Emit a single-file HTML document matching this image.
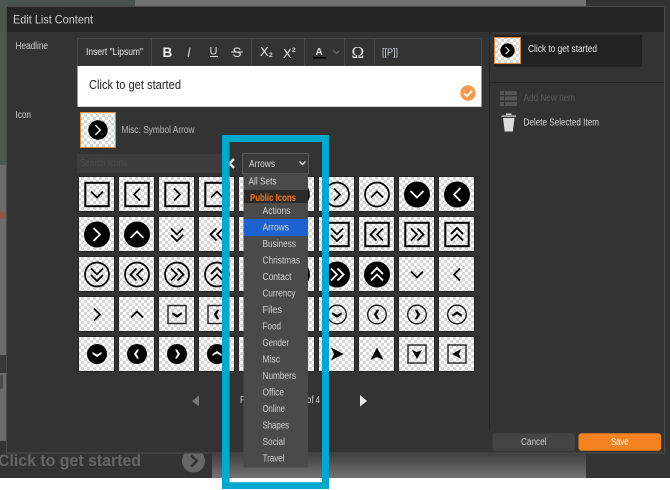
<!DOCTYPE html>
<html><head><meta charset="utf-8"><style>
html,body{margin:0;padding:0;background:#fff;width:670px;height:490px;overflow:hidden}
svg{display:block;filter:blur(.35px)}
text{font-family:"Liberation Sans",sans-serif;font-size:10px;fill:#d0d0d0;stroke:currentColor;stroke-width:0}
.m text{font-size:10px;fill:#d2d2d2}
</style></head><body>
<svg width="670" height="490" viewBox="0 0 670 490" xmlns="http://www.w3.org/2000/svg">
<defs>
<pattern id="chk" width="6" height="6" patternUnits="userSpaceOnUse"><rect width="6" height="6" fill="#fff"/><rect width="3" height="3" fill="#d6d6d6"/><rect x="3" y="3" width="3" height="3" fill="#d6d6d6"/></pattern>
<linearGradient id="bot" x1="0" y1="0" x2="0" y2="1"><stop offset="0" stop-color="#3e3e3e"/><stop offset="1" stop-color="#737373"/></linearGradient>
<path id="c" d="M-6-3L0 3L6-3" fill="none" stroke="#000" stroke-width="1.800"/>
<path id="cw" d="M-6.500-3.500L0 3L6.500-3.500" fill="none" stroke="#fff" stroke-width="1.800"/>
<path id="d" d="M-6-6L0 0L6-6M-6 0.500L0 6.500L6 0.500" fill="none" stroke="#000" stroke-width="1.800"/>
<path id="dw" d="M-6-6L0 0L6-6M-6 0.500L0 6.500L6 0.500" fill="none" stroke="#fff" stroke-width="1.800"/>
<path id="b" d="M-4.500-2L0 0.600L4.500-2L4.500 0L0 3L-4.500 0Z" fill="#000" stroke="#000" stroke-width=".5"/>
<path id="bw" d="M-4.500-2L0 0.600L4.500-2L4.500 0L0 3L-4.500 0Z" fill="#fff"/>
<path id="t" d="M-6.500-6L0 6.500L6.500-6L0-3Z" fill="#000"/>
<g id="sq1"><rect x="-11.700" y="-11.700" width="23.400" height="23.400" fill="none" stroke="#000" stroke-width="2"/><use href="#c"/></g>
<g id="ci1"><circle r="13" fill="#000"/><use href="#cw"/></g>
<g id="ri1"><circle r="12" fill="none" stroke="#000" stroke-width="1.700"/><use href="#c"/></g>
<g id="sq2"><rect x="-11.700" y="-11.700" width="23.400" height="23.400" fill="none" stroke="#000" stroke-width="2"/><use href="#d"/></g>
<g id="ci2"><circle r="13" fill="#000"/><use href="#dw"/></g>
<g id="ri2"><circle r="12" fill="none" stroke="#000" stroke-width="1.700"/><use href="#d"/></g>
<g id="sq3"><rect x="-9" y="-9" width="18" height="18" fill="none" stroke="#222" stroke-width="1.400"/><use href="#b"/></g>
<g id="ri3"><circle r="9.300" fill="none" stroke="#111" stroke-width="1.300"/><use href="#b"/></g>
<g id="ci3"><circle r="10" fill="#000"/><use href="#bw"/></g>
<g id="sq4"><rect x="-9" y="-9" width="18" height="18" fill="none" stroke="#222" stroke-width="1.400"/><path d="M-5-4L0 5L5-4L0-2Z" fill="#000"/></g>
</defs>

<!-- background -->
<rect width="670" height="490" fill="#fff"/>
<rect width="670" height="478" fill="#6c6c6c"/>
<rect x="586" width="84" height="478" fill="#333"/>
<rect x="0" y="0" width="135" height="6" fill="#46524a"/>
<rect x="0" y="0" width="7" height="165" fill="#4c574f"/>
<rect x="135" y="0" width="451" height="6" fill="#727272"/>
<rect x="0" y="212" width="7" height="7" fill="#a0522d" opacity=".7"/>
<rect x="0" y="355" width="6" height="18" fill="#383838"/>
<rect x="0" y="375" width="3" height="14" fill="#4c4c4c"/>
<rect x="0" y="453" width="586" height="25" fill="url(#bot)"/>
<rect x="0" y="441" width="212" height="37" fill="#333"/>
<text x="-2" y="466" textLength="143" lengthAdjust="spacingAndGlyphs" style="font-size:17px;font-weight:bold;fill:#666">Click to get started</text>
<circle cx="193.500" cy="461" r="11.500" fill="#666"/>
<path d="M191 455.500L197 461L191 466.500" fill="none" stroke="#333" stroke-width="2.500"/>

<!-- modal -->
<rect x="6.500" y="6.500" width="658" height="446.500" fill="#333" stroke="#4c4c4c"/>
<rect x="7" y="7" width="657" height="25" fill="#252525"/>
<text x="13" y="23.500" textLength="80" lengthAdjust="spacingAndGlyphs" style="font-size:12px;fill:#cecece">Edit List Content</text>

<text x="15.500" y="49" textLength="32.500" lengthAdjust="spacingAndGlyphs">Headline</text>
<text x="15.500" y="118" textLength="15.500" lengthAdjust="spacingAndGlyphs">Icon</text>

<!-- toolbar -->
<rect x="77.500" y="38.500" width="404" height="27.500" fill="#333" stroke="#484848"/>
<path d="M151.500 39V66M251.500 39V66M304.500 39V66M344.500 39V66M374.500 39V66" stroke="#484848"/>
<text x="86" y="55" textLength="57" lengthAdjust="spacingAndGlyphs" style="fill:#eaeaea">Insert "Lipsum"</text>
<text x="162.500" y="57" style="font-size:13.500px;font-weight:bold;fill:#eee">B</text>
<text x="187" y="57" style="font-size:13.500px;font-style:italic;fill:#ccc">I</text>
<text x="209.500" y="54.500" style="font-size:11px;fill:#ddd">U</text>
<rect x="210" y="56" width="8" height="1" fill="#ddd"/>
<text x="232.500" y="57" style="font-size:13.500px;fill:#ddd">S</text>
<rect x="231" y="51.500" width="12" height="1" fill="#ddd"/>
<text x="260" y="56" style="font-size:13px;fill:#e4e4e4">X</text>
<text x="269" y="57" style="font-size:6.500px;font-weight:bold;fill:#ddd">2</text>
<text x="283" y="58" style="font-size:13px;fill:#e4e4e4">X</text>
<text x="292" y="52" style="font-size:6.500px;font-weight:bold;fill:#ddd">2</text>
<text x="315.500" y="55" style="font-size:10px;font-weight:bold;fill:#ddd">A</text>
<rect x="313" y="57" width="13" height="1.600" fill="#000"/>
<path d="M333.500 50.500L336.500 53.500L339.500 50.500" fill="none" stroke="#666" stroke-width="1.200"/>
<text x="351.500" y="58" style="font-family:'Liberation Serif',serif;font-size:17px;fill:#e4e4e4">Ω</text>
<text x="382" y="55.500" textLength="16" lengthAdjust="spacingAndGlyphs" style="fill:#c4d4e4">[[P]]</text>

<!-- editor -->
<rect x="77.500" y="66" width="404" height="40.500" fill="#fff"/>
<rect x="77.500" y="106" width="404" height="1" fill="#ccc"/>
<text x="89" y="89" textLength="92" lengthAdjust="spacingAndGlyphs" style="font-size:12.500px;fill:#222">Click to get started</text>
<circle cx="468" cy="93" r="7.700" fill="#f59a4c"/>
<path d="M464 93.500L467 96.200L472.300 90.800" fill="none" stroke="#fff" stroke-width="1.800"/>

<!-- icon row -->
<rect x="80.500" y="112.500" width="35" height="35" fill="url(#chk)" stroke="#e08a3a"/>
<use href="#ci1" transform="translate(98 130) rotate(-90) scale(.75)"/>
<text x="121.500" y="133" textLength="73" lengthAdjust="spacingAndGlyphs" style="fill:#bcbcbc">Misc: Symbol Arrow</text>

<!-- search -->
<rect x="77" y="154" width="145" height="19" fill="#3d3d3d"/>
<text x="80" y="166" textLength="47" lengthAdjust="spacingAndGlyphs" style="fill:#4c4c4c">Search Icons</text>
<path d="M234 159L229.500 163.500L234 168" fill="none" stroke="#e4e4e4" stroke-width="2.400"/>

<!-- tiles -->
<g fill="url(#chk)" stroke="#222" stroke-width="1">
<g id="rowr">
<rect x="78.500" y="176.500" width="36" height="35"/><rect x="118.500" y="176.500" width="36" height="35"/><rect x="158.500" y="176.500" width="36" height="35"/><rect x="198.500" y="176.500" width="36" height="35"/><rect x="238.500" y="176.500" width="36" height="35"/><rect x="278.500" y="176.500" width="36" height="35"/><rect x="318.500" y="176.500" width="36" height="35"/><rect x="358.500" y="176.500" width="36" height="35"/><rect x="398.500" y="176.500" width="36" height="35"/><rect x="438.500" y="176.500" width="36" height="35"/>
</g>
<use href="#rowr" y="40"/><use href="#rowr" y="80"/><use href="#rowr" y="120"/><use href="#rowr" y="160"/>
</g>
<!-- row 1 -->
<use href="#sq1" transform="translate(97 194.500)"/>
<use href="#sq1" transform="translate(137 194.500) rotate(90)"/>
<use href="#sq1" transform="translate(177 194.500) rotate(-90)"/>
<use href="#sq1" transform="translate(217 194.500) rotate(180)"/>
<use href="#ri1" transform="translate(257 194.500)"/>
<use href="#ri1" transform="translate(297 194.500) rotate(90)"/>
<use href="#ri1" transform="translate(337 194.500) rotate(-90)"/>
<use href="#ri1" transform="translate(377 194.500) rotate(180)"/>
<use href="#ci1" transform="translate(417 194.500)"/>
<use href="#ci1" transform="translate(457 194.500) rotate(90)"/>
<!-- row 2 -->
<use href="#ci1" transform="translate(97 234.500) rotate(-90)"/>
<use href="#ci1" transform="translate(137 234.500) rotate(180)"/>
<use href="#d" transform="translate(177 234.500)"/>
<use href="#d" transform="translate(217 234.500) rotate(90)"/>
<use href="#d" transform="translate(257 234.500) rotate(-90)"/>
<use href="#d" transform="translate(297 234.500) rotate(180)"/>
<use href="#sq2" transform="translate(337 234.500)"/>
<use href="#sq2" transform="translate(377 234.500) rotate(90)"/>
<use href="#sq2" transform="translate(417 234.500) rotate(-90)"/>
<use href="#sq2" transform="translate(457 234.500) rotate(180)"/>
<!-- row 3 -->
<use href="#ri2" transform="translate(97 274.500)"/>
<use href="#ri2" transform="translate(137 274.500) rotate(90)"/>
<use href="#ri2" transform="translate(177 274.500) rotate(-90)"/>
<use href="#ri2" transform="translate(217 274.500) rotate(180)"/>
<use href="#ci2" transform="translate(257 274.500)"/>
<use href="#ci2" transform="translate(297 274.500) rotate(90)"/>
<use href="#ci2" transform="translate(337 274.500) rotate(-90)"/>
<use href="#ci2" transform="translate(377 274.500) rotate(180)"/>
<use href="#c" transform="translate(417 274.500)"/>
<use href="#c" transform="translate(457 274.500) rotate(90)"/>
<!-- row 4 -->
<use href="#c" transform="translate(97 314.500) rotate(-90)"/>
<use href="#c" transform="translate(137 314.500) rotate(180)"/>
<use href="#sq3" transform="translate(177 314.500)"/>
<use href="#sq3" transform="translate(217 314.500) rotate(90)"/>
<use href="#sq3" transform="translate(257 314.500) rotate(-90)"/>
<use href="#sq3" transform="translate(297 314.500) rotate(180)"/>
<use href="#ri3" transform="translate(337 314.500)"/>
<use href="#ri3" transform="translate(377 314.500) rotate(90)"/>
<use href="#ri3" transform="translate(417 314.500) rotate(-90)"/>
<use href="#ri3" transform="translate(457 314.500) rotate(180)"/>
<!-- row 5 -->
<use href="#ci3" transform="translate(97 354)"/>
<use href="#ci3" transform="translate(137 354) rotate(90)"/>
<use href="#ci3" transform="translate(177 354) rotate(-90)"/>
<use href="#ci3" transform="translate(217 354) rotate(180)"/>
<use href="#t" transform="translate(257 354)"/>
<use href="#t" transform="translate(297 354) rotate(90)"/>
<use href="#t" transform="translate(337 354) rotate(-90)"/>
<use href="#t" transform="translate(377 354) rotate(180)"/>
<use href="#sq4" transform="translate(417 354)"/>
<use href="#sq4" transform="translate(457 354) rotate(90)"/>

<!-- pagination -->
<path d="M199 395.500V406.500L192 401Z" fill="#777"/>
<path d="M360 395V406.500L367 401Z" fill="#e8e8e8"/>
<text x="240" y="403" textLength="18" lengthAdjust="spacingAndGlyphs" style="fill:#d0d0d0">Page</text>
<text x="307" y="403" textLength="13" lengthAdjust="spacingAndGlyphs" style="fill:#d0d0d0">of 4</text>

<!-- right pane -->
<path d="M489.500 32V431" stroke="#232323"/>
<path d="M490 82.500H664" stroke="#262626"/>
<rect x="494" y="35" width="148" height="32" fill="#222"/>
<rect x="494.500" y="37.500" width="26" height="26" fill="url(#chk)" stroke="#d8823a"/>
<use href="#ci1" transform="translate(507.500 50.500) rotate(-90) scale(.55)"/>
<text x="528" y="52" textLength="69" lengthAdjust="spacingAndGlyphs" style="fill:#e6e6e6">Click to get started</text>
<g fill="#555">
<rect x="500" y="91" width="4" height="4"/><rect x="505" y="91" width="12" height="4"/>
<rect x="500" y="96.500" width="4" height="4"/><rect x="505" y="96.500" width="12" height="4"/>
<rect x="500" y="102" width="4" height="4"/><rect x="505" y="102" width="12" height="4"/>
</g>
<text x="523.500" y="101" textLength="51.500" lengthAdjust="spacingAndGlyphs" style="fill:#5c5c5c">Add New Item</text>
<path d="M501.500 115.500H516V116.800H501.500ZM503 118H514.500L512.800 131.500H504.700Z" fill="#dcdcdc"/>
<rect x="506" y="113.500" width="5.500" height="1.500" fill="#dcdcdc"/>
<text x="523.500" y="125.500" textLength="75.500" lengthAdjust="spacingAndGlyphs" style="fill:#dadada">Delete Selected Item</text>

<!-- buttons -->
<rect x="492.300" y="433.300" width="82.700" height="17.500" rx="3" fill="#444"/>
<text x="521" y="445" textLength="25.500" lengthAdjust="spacingAndGlyphs" style="fill:#d0d0d0">Cancel</text>
<rect x="578.500" y="433.300" width="82.700" height="17.500" rx="3" fill="#f58220"/>
<text x="611" y="445" textLength="17.500" lengthAdjust="spacingAndGlyphs" style="fill:#fff">Save</text>

<!-- select + dropdown -->
<rect x="242.500" y="153.500" width="66" height="20" fill="#3a3a3a" stroke="#5a5a5a"/>
<text x="249" y="167" textLength="26" lengthAdjust="spacingAndGlyphs" style="fill:#d8d8d8">Arrows</text>
<path d="M299.500 161.500L302.500 164.500L305.500 161.500" fill="none" stroke="#ddd" stroke-width="1.400"/>
<rect x="243.500" y="173.500" width="64.500" height="294" fill="#4a4a4a"/>
<text x="248.500" y="184.500" textLength="28" lengthAdjust="spacingAndGlyphs" style="fill:#d8d8d8">All Sets</text>
<rect x="244" y="190" width="64" height="13" fill="#2b2a29"/>
<text x="250" y="201" textLength="46" lengthAdjust="spacingAndGlyphs" style="font-weight:bold;fill:#f47a20">Public Icons</text>
<rect x="244" y="219" width="64" height="17" fill="#1c62d0"/>
<g class="m">
<text x="262.500" y="214" textLength="28" lengthAdjust="spacingAndGlyphs">Actions</text>
<text x="262.500" y="230.500" textLength="26.500" lengthAdjust="spacingAndGlyphs">Arrows</text>
<text x="262.500" y="247" textLength="33.500" lengthAdjust="spacingAndGlyphs">Business</text>
<text x="262.500" y="263.500" textLength="37.500" lengthAdjust="spacingAndGlyphs">Christmas</text>
<text x="262.500" y="280" textLength="29" lengthAdjust="spacingAndGlyphs">Contact</text>
<text x="262.500" y="296.500" textLength="33" lengthAdjust="spacingAndGlyphs">Currency</text>
<text x="262.500" y="313" textLength="19.500" lengthAdjust="spacingAndGlyphs">Files</text>
<text x="262.500" y="329.500" textLength="18.500" lengthAdjust="spacingAndGlyphs">Food</text>
<text x="262.500" y="346" textLength="26.500" lengthAdjust="spacingAndGlyphs">Gender</text>
<text x="262.500" y="362.500" textLength="17.500" lengthAdjust="spacingAndGlyphs">Misc</text>
<text x="262.500" y="379" textLength="33.500" lengthAdjust="spacingAndGlyphs">Numbers</text>
<text x="262.500" y="395.500" textLength="21.500" lengthAdjust="spacingAndGlyphs">Office</text>
<text x="262.500" y="412" textLength="22.500" lengthAdjust="spacingAndGlyphs">Online</text>
<text x="262.500" y="428.500" textLength="26.500" lengthAdjust="spacingAndGlyphs">Shapes</text>
<text x="262.500" y="445" textLength="22.500" lengthAdjust="spacingAndGlyphs">Social</text>
<text x="262.500" y="461.500" textLength="22" lengthAdjust="spacingAndGlyphs">Travel</text>
</g>

<!-- cyan frame -->
<path d="M222 135H329V489H222ZM229.600 142V482.300H322V142Z" fill="#00a8cc" fill-rule="evenodd"/>
</svg>
</body></html>
